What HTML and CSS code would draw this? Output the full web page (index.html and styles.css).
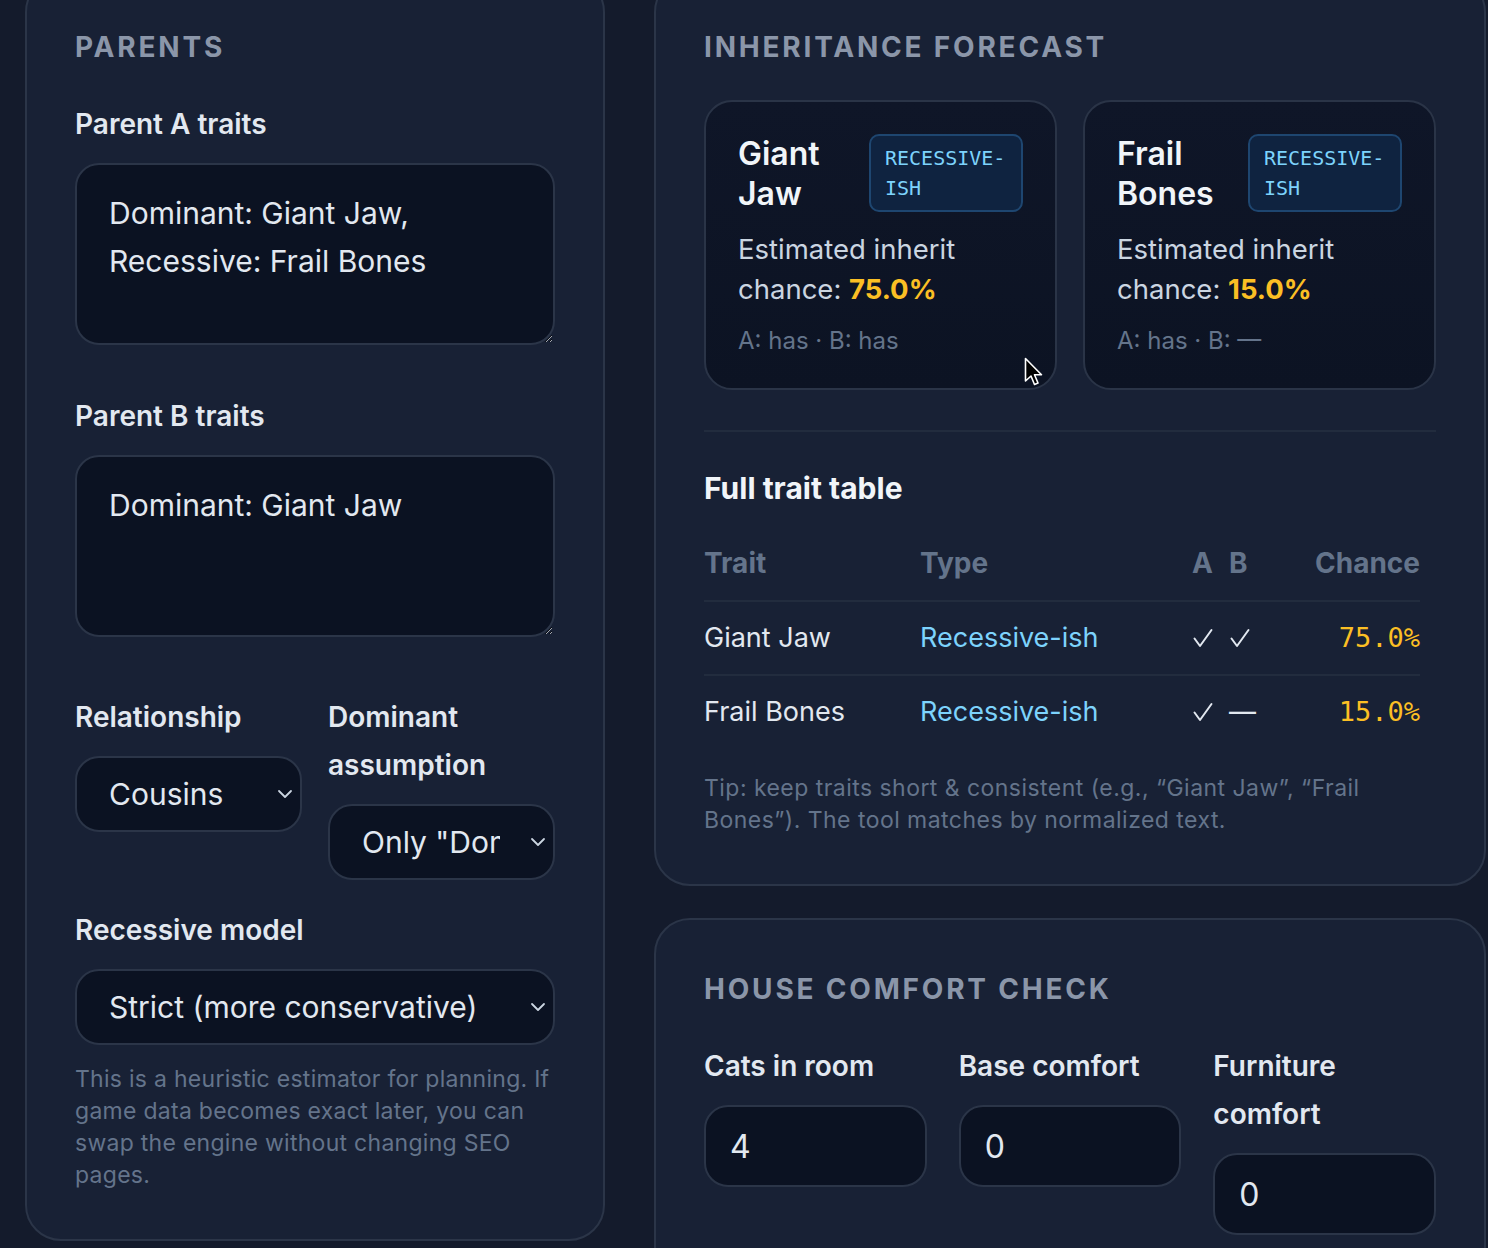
FILE: index.html
```html
<!DOCTYPE html>
<html lang="en">
<head>
<meta charset="utf-8">
<title>Inheritance forecast</title>
<link rel="stylesheet" href="styles.css">
</head>
<body>
<div class="page">
  <section class="panel panel-left">
    <h2 class="kicker">Parents</h2>
    <div class="field field-a">
      <label class="label">Parent A traits</label>
      <textarea class="textarea">Dominant: Giant Jaw, Recessive: Frail Bones</textarea>
    </div>
    <div class="field field-b">
      <label class="label">Parent B traits</label>
      <textarea class="textarea">Dominant: Giant Jaw</textarea>
    </div>
    <div class="row2">
      <div class="field">
        <label class="label">Relationship</label>
        <div class="select"><span class="select-text">Cousins</span><svg class="chev" viewBox="0 0 16 10"><path d="M2 2l6 6 6-6"/></svg></div>
      </div>
      <div class="field">
        <label class="label">Dominant assumption</label>
        <div class="select"><span class="select-text">Only "Dominant" traits</span><svg class="chev" viewBox="0 0 16 10"><path d="M2 2l6 6 6-6"/></svg></div>
      </div>
    </div>
    <div class="field">
      <label class="label">Recessive model</label>
      <div class="select"><span class="select-text">Strict (more conservative)</span><svg class="chev" viewBox="0 0 16 10"><path d="M2 2l6 6 6-6"/></svg></div>
    </div>
    <p class="note">This is a heuristic estimator for planning. If game data becomes exact later, you can swap the engine without changing SEO pages.</p>
  </section>

  <div class="right-col">
    <section class="panel panel-right">
      <h2 class="kicker">Inheritance forecast</h2>
      <div class="cards">
        <div class="card">
          <div class="card-head">
            <h3 class="card-title">Giant Jaw</h3>
            <span class="badge">RECESSIVE-ISH</span>
          </div>
          <p class="card-text">Estimated inherit chance: <strong class="pct">75.0%</strong></p>
          <p class="card-meta">A: has · B: has</p>
        </div>
        <div class="card">
          <div class="card-head">
            <h3 class="card-title">Frail Bones</h3>
            <span class="badge">RECESSIVE-ISH</span>
          </div>
          <p class="card-text">Estimated inherit chance: <strong class="pct">15.0%</strong></p>
          <p class="card-meta">A: has · B: —</p>
        </div>
      </div>
      <hr class="divider">
      <h3 class="table-title">Full trait table</h3>
      <table class="traits">
        <colgroup>
          <col class="c-trait"><col class="c-type"><col class="c-a"><col class="c-b"><col class="c-chance">
        </colgroup>
        <thead>
          <tr><th>Trait</th><th>Type</th><th>A</th><th>B</th><th class="num">Chance</th></tr>
        </thead>
        <tbody>
          <tr><td>Giant Jaw</td><td class="type">Recessive-ish</td><td><svg class="check" viewBox="0 0 22 22"><path d="M2.5 11.5 L8 19 L19.5 3"/></svg></td><td><svg class="check" viewBox="0 0 22 22"><path d="M2.5 11.5 L8 19 L19.5 3"/></svg></td><td class="num mono">75.0%</td></tr>
          <tr><td>Frail Bones</td><td class="type">Recessive-ish</td><td><svg class="check" viewBox="0 0 22 22"><path d="M2.5 11.5 L8 19 L19.5 3"/></svg></td><td>—</td><td class="num mono">15.0%</td></tr>
        </tbody>
      </table>
      <p class="tip">Tip: keep traits short &amp; consistent (e.g., “Giant Jaw”, “Frail Bones”). The tool matches by normalized text.</p>
    </section>

    <section class="panel panel-comfort">
      <h2 class="kicker">House comfort check</h2>
      <div class="row3">
        <div class="field">
          <label class="label">Cats in room</label>
          <input class="input" type="text" value="4">
        </div>
        <div class="field">
          <label class="label">Base comfort</label>
          <input class="input" type="text" value="0">
        </div>
        <div class="field">
          <label class="label">Furniture comfort</label>
          <input class="input" type="text" value="0">
        </div>
      </div>
    </section>
  </div>
</div>
<svg class="cursor" width="22" height="32" viewBox="0 0 22 32"><path d="M1.5 1.5 L1.5 24 L7 19 L10.5 27.5 L14 26 L10.5 17.8 L17.5 17.8 Z"/></svg>
</body>
</html>
```
FILE: styles.css
```css
* { box-sizing: border-box; }
html, body { margin: 0; overflow: hidden; }
body {
  position: relative;
  height: 1248px;
  background: #141b2c;
  font-family: Inter, "Noto Sans", sans-serif;
  color: #e2e8f0;
}
.page {
  display: grid;
  grid-template-columns: 580px 832px;
  column-gap: 49px;
  padding-left: 25px;
  margin-top: -24px;
  align-items: start;
}
.panel {
  background: #182135;
  border: 2px solid #2b3548;
  border-radius: 36px;
  padding: 48px;
}
.kicker {
  margin: 0 0 32px;
  font-size: 28px;
  line-height: 42px;
  font-weight: 700;
  letter-spacing: 0.1em;
  text-transform: uppercase;
  color: #8b96a9;
}
.field { min-width: 0; }
.label {
  display: block;
  font-size: 28px;
  line-height: 48px;
  font-weight: 600;
  color: #e2e8f0;
  margin-bottom: 15px;
}
.textarea {
  display: block;
  width: 100%;
  height: 182px;
  margin: 0;
  padding: 24px 32px;
  border: 2px solid #2b3548;
  border-radius: 24px;
  background: #0b1222;
  color: #e2e8f0;
  font: 400 30px/48px Inter, sans-serif;
  resize: vertical;
  color-scheme: dark;
  outline: none;
}
.field-a { margin-bottom: 47px; }
.field-b { margin-bottom: 56px; }
.row2 {
  display: grid;
  grid-template-columns: minmax(0, 1fr) minmax(0, 1fr);
  column-gap: 26px;
  align-items: start;
  margin-bottom: 26px;
}
.select {
  display: flex;
  align-items: center;
  height: 76px;
  padding: 0 7px 0 32px;
  border: 2px solid #2b3548;
  border-radius: 24px;
  background: #0b1222;
}
.select-text {
  flex: 1;
  min-width: 0;
  overflow: hidden;
  white-space: nowrap;
  font-size: 30px;
  color: #e2e8f0;
}
.chev {
  flex: none;
  width: 16px;
  height: 10px;
  margin-left: 30px;
  fill: none;
  stroke: #cbd5e1;
  stroke-width: 1.8;
  stroke-linecap: round;
  stroke-linejoin: round;
}
.note {
  margin: 18px 0 0;
  font-size: 23px;
  line-height: 32px;
  letter-spacing: 0.012em;
  color: #64748b;
}
.right-col { display: flex; flex-direction: column; }
.panel-comfort { margin-top: 32px; }
.cards {
  display: grid;
  grid-template-columns: 1fr 1fr;
  column-gap: 26px;
}
.card {
  border: 2px solid #2a3447;
  border-radius: 28px;
  padding: 32px;
  background: linear-gradient(180deg, #0f1628, #0c1323);
}
.card-head {
  display: flex;
  justify-content: space-between;
  align-items: flex-start;
  gap: 16px;
}
.card-title {
  margin: 0;
  font-size: 32px;
  line-height: 40px;
  font-weight: 600;
  color: #f1f5f9;
}
.badge {
  flex: none;
  width: 154px;
  padding: 7px 14px;
  border: 2px solid #1e4670;
  border-radius: 10px;
  background: #0f2340;
  font: 400 20px/30px "DejaVu Sans Mono", monospace;
  color: #7dd3fc;
}
.card-text {
  margin: 15px 0 0;
  font-size: 27.5px;
  line-height: 40px;
  color: #cbd5e1;
}
.pct { color: #fbbf24; font-weight: 700; }
.card-meta {
  margin: 17px 0 0;
  font-size: 24px;
  line-height: 30px;
  color: #64748b;
}
.divider {
  margin: 40px 0 36px;
  border: 0;
  border-top: 2px solid #222c3e;
}
.table-title {
  margin: 0;
  font-size: 30px;
  line-height: 40px;
  font-weight: 700;
  color: #f1f5f9;
}
.traits {
  width: 716px;
  margin-top: 19px;
  border-collapse: collapse;
  table-layout: fixed;
}
.c-trait { width: 216px; }
.c-type { width: 272px; }
.c-a { width: 37px; }
.c-b { width: 60px; }
.traits th, .traits td {
  padding: 16px 0 16px;
  text-align: left;
  font-size: 27px;
  line-height: 40px;
  white-space: nowrap;
  vertical-align: middle;
}
.traits th {
  padding-bottom: 17px;
  font-size: 28px;
  font-weight: 700;
  color: #64748b;
  border-bottom: 2px solid #222c3e;
}
.traits tbody tr:first-child td { border-bottom: 2px solid #222c3e; }
.traits td { color: #e2e8f0; }
.traits .num { text-align: right; }
.traits .type { color: #7dd3fc; }
.traits .mono {
  font-family: "DejaVu Sans Mono", monospace;
  font-size: 27px;
  color: #fbbf24;
}
.check {
  display: block;
  width: 22px;
  height: 22px;
  fill: none;
  stroke: #e2e8f0;
  stroke-width: 2;
  stroke-linecap: round;
  stroke-linejoin: round;
}
.tip {
  margin: 24px 0 0;
  font-size: 23px;
  line-height: 32px;
  letter-spacing: 0.02em;
  color: #64748b;
}
.row3 {
  display: grid;
  grid-template-columns: repeat(3, minmax(0, 1fr));
  column-gap: 32px;
  align-items: start;
}
.input {
  display: block;
  width: 100%;
  height: 82px;
  margin: 0;
  padding: 0 24px;
  border: 2px solid #2b3548;
  border-radius: 24px;
  background: #0b1222;
  color: #e2e8f0;
  font: 400 32px Inter, sans-serif;
  outline: none;
}
.cursor {
  position: absolute;
  left: 1024px;
  top: 357px;
  fill: #000;
  stroke: #fff;
  stroke-width: 1.6;
  stroke-linejoin: round;
}
```
